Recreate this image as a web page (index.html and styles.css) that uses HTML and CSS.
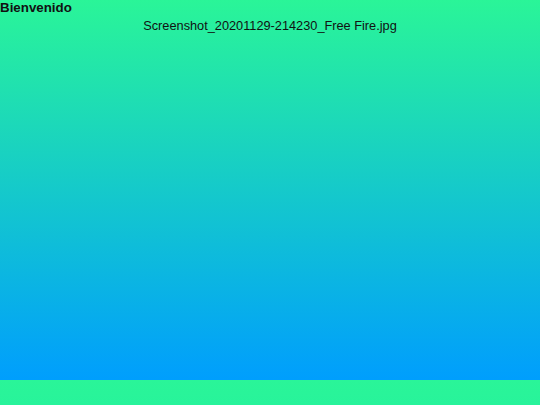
FILE: index.html
```html
<!DOCTYPE html>
<html lang="es">
<head>
<meta charset="utf-8">
<title>Bienvenido</title>
<link rel="stylesheet" href="styles.css">
</head>
<body>
<main class="page">
  <h1 class="title">Bienvenido</h1>
  <p class="file">Screenshot_20201129-214230_Free Fire.jpg</p>
</main>
<footer class="band"></footer>
</body>
</html>
```

FILE: styles.css
```css
html, body {
  margin: 0;
  padding: 0;
}
body {
  width: 540px;
  height: 405px;
  overflow: hidden;
  font-family: "Liberation Sans", Arial, sans-serif;
  color: #111;
}
.page {
  height: 380px;
  background: linear-gradient(to bottom, #2af598, #009efd);
  box-sizing: border-box;
}
.title {
  margin: 0;
  font-size: 13.33px;
  font-weight: bold;
  line-height: 15px;
}
.file {
  margin: 3px 0 0;
  font-size: 12.75px;
  line-height: 16px;
  text-align: center;
}
.band {
  height: 25px;
  background: linear-gradient(to bottom, #2af598, #28f39b);
}
```
